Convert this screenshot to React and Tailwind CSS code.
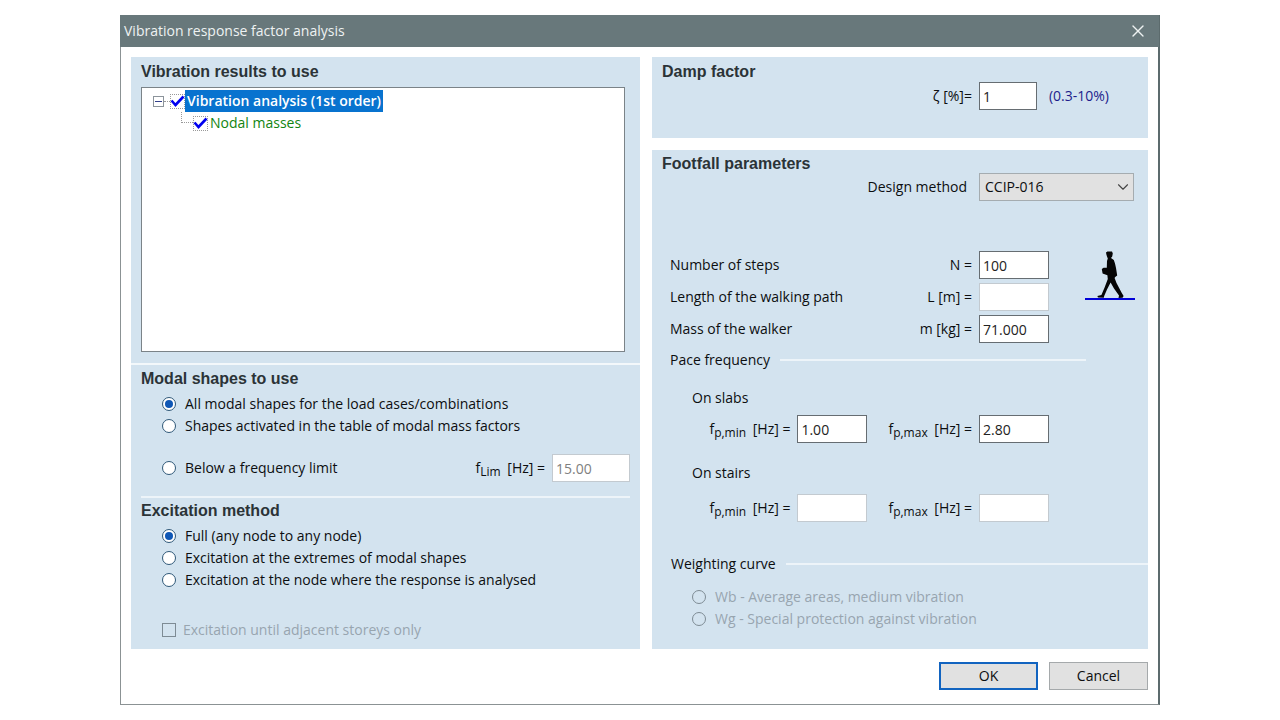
import React, { useState } from 'react';
import { ChevronDown, X } from 'lucide-react';

const modalOptions = [
  { value: 'all', label: 'All modal shapes for the load cases/combinations' },
  { value: 'table', label: 'Shapes activated in the table of modal mass factors' },
];

const excitationOptions = [
  { value: 'full', label: 'Full (any node to any node)' },
  { value: 'extremes', label: 'Excitation at the extremes of modal shapes' },
  { value: 'response', label: 'Excitation at the node where the response is analysed' },
];

const weightingOptions = [
  { value: 'wb', label: 'Wb - Average areas, medium vibration' },
  { value: 'wg', label: 'Wg - Special protection against vibration' },
];

function Heading({ children }) {
  return (
    <h2 className="font-['Liberation_Sans',Arial,sans-serif] text-base leading-[18px] font-bold text-[#2b3337]">
      {children}
    </h2>
  );
}

function Radio({ name, value, label, checked, onChange, disabled }) {
  return (
    <label className={`flex h-[22px] items-center gap-[9px] ${disabled ? 'text-[#98a5af]' : ''}`}>
      <input
        type="radio"
        name={name}
        value={value}
        checked={checked}
        disabled={disabled}
        onChange={() => onChange(value)}
        className="grid size-[14px] shrink-0 appearance-none place-content-center rounded-full border border-[#2f5878] bg-white checked:before:size-2 checked:before:rounded-full checked:before:bg-[#0f57b5] disabled:border-[#7e8b94] disabled:bg-transparent"
      />
      {label}
    </label>
  );
}

function NumberField({ id, label, value, onChange, disabled, width = 'w-[70px]' }) {
  return (
    <div className="flex items-center justify-end gap-[7px]">
      <label htmlFor={id} className="whitespace-nowrap">{label}</label>
      <input
        id={id}
        type="text"
        name={id}
        value={value}
        disabled={disabled}
        onChange={onChange}
        className={`h-7 ${width} border border-[#666d72] bg-white px-[3px] text-[#222] disabled:border-[#c3cad0] disabled:text-[#808080]`}
      />
    </div>
  );
}

function TreeCheckbox({ id, checked, onChange }) {
  return (
    <span className="relative size-[15px] shrink-0">
      <input
        id={id}
        type="checkbox"
        checked={checked}
        onChange={onChange}
        className="block size-[15px] appearance-none border border-dotted border-[#999] bg-white"
      />
      {checked && (
        <svg viewBox="0 0 15 15" className="pointer-events-none absolute inset-0 size-[15px]" fill="none" stroke="#0000f0" strokeWidth="2.6">
          <path d="M1.5 6.5 5.5 11 13.5 2.5" />
        </svg>
      )}
    </span>
  );
}

function Walker() {
  return (
    <svg viewBox="0 0 50 50" className="size-[50px]" aria-hidden="true">
      <path
        fill="#050505"
        d="M21 1.6 22.4.6 27 .6 27.8 2.4 27.2 5.4 26 7 28.8 9 30 12.5 31 17 32.2 24.5 30.2 26 29.6 27 31.5 32 36.5 41.5 38.6 45 37.6 46.8 33.5 47 34 44.5 29 37.5 25.6 31.5 22 38.5 19.2 45 18.8 46.8 13 46.4 12.4 45 16.4 44 19.6 36.5 22.8 28 22.4 24.2 17.6 22.4 16.8 18 18.6 16.8 21.8 16.8 22 10 22.8 7.4 22 5.6 21.4 3.6Z"
      />
      <path d="M0 48H50" stroke="#0000d8" strokeWidth="2" />
    </svg>
  );
}

export default function App() {
  const [tree, setTree] = useState({ analysis: true, masses: true });
  const [modal, setModal] = useState('all');
  const [excitation, setExcitation] = useState('full');
  const [method, setMethod] = useState('CCIP-016');
  const [values, setValues] = useState({
    damping: '1',
    fLim: '15.00',
    steps: '100',
    length: '',
    mass: '71.000',
    slabMin: '1.00',
    slabMax: '2.80',
    stairMin: '',
    stairMax: '',
  });

  const handleChange = (event) => {
    const { name, value } = event.target;
    setValues((prev) => ({ ...prev, [name]: value }));
  };

  const toggle = (key) => setTree((prev) => ({ ...prev, [key]: !prev[key] }));

  const frequency = (limit) => (
    <>
      f<sub className="mr-[3px] text-xs">{limit}</sub> [Hz] =
    </>
  );

  return (
    <div className="flex min-h-screen items-center justify-center bg-white font-['Open_Sans','Noto_Sans',sans-serif] text-sm leading-5 text-[#0c0e10]">
      <div className="w-full max-w-[1040px] border border-r-2 border-t-0 border-[#8b9294] border-r-[#5c6b6d] bg-white">
        <header className="-mx-px flex h-8 items-center justify-between bg-[#68787b] pr-[11px] pl-1 text-[#eef2f2]">
          <h1>Vibration response factor analysis</h1>
          <button type="button" aria-label="Close">
            <X className="size-5" strokeWidth={1.6} />
          </button>
        </header>

        <main className="px-[10px] pt-[10px] pb-[14px]">
          <div className="grid grid-cols-[509fr_496fr] gap-3">
            <div className="bg-[#d3e3ef] pb-2">
              <section className="px-[10px] pt-1.5 pb-[11px]">
                <Heading>Vibration results to use</Heading>
                <div className="mt-1.5 mr-[5px] h-[265px] border border-[#7b8388] bg-white pt-[2px] pl-[11px]">
                  <div className="flex h-[22px] items-center">
                    <button type="button" aria-label="Collapse" className="grid size-[11px] place-content-center border border-[#8c949b] bg-white">
                      <span className="block h-px w-[7px] bg-[#33418c]" />
                    </button>
                    <span className="w-1.5 border-t border-dotted border-[#999]" />
                    <TreeCheckbox id="analysis" checked={tree.analysis} onChange={() => toggle('analysis')} />
                    <label htmlFor="analysis" className="bg-[#0873cf] px-[2px] leading-[22px] font-semibold text-white">
                      Vibration analysis (1st order)
                    </label>
                  </div>
                  <div className="flex h-[22px] items-center pl-7">
                    <span className="h-[11px] w-3 self-start border-b border-l border-dotted border-[#999]" />
                    <TreeCheckbox id="masses" checked={tree.masses} onChange={() => toggle('masses')} />
                    <label htmlFor="masses" className="pl-[2px] text-[#118511]">Nodal masses</label>
                  </div>
                </div>
              </section>

              <section className="border-t-2 border-[#f3f8fb] px-[10px] pt-[5px] pb-[14px]">
                <Heading>Modal shapes to use</Heading>
                <div className="mt-[5px] pl-[21px]">
                  {modalOptions.map((option) => (
                    <Radio key={option.value} name="modal" {...option} checked={modal === option.value} onChange={setModal} />
                  ))}
                  <div className="mt-[17px] flex items-center justify-between">
                    <Radio name="modal" value="limit" label="Below a frequency limit" checked={modal === 'limit'} onChange={setModal} />
                    <NumberField
                      id="fLim"
                      label={frequency('Lim')}
                      value={values.fLim}
                      onChange={handleChange}
                      disabled={modal !== 'limit'}
                      width="w-[78px]"
                    />
                  </div>
                </div>
              </section>

              <section className="mx-[10px] border-t-2 border-[#edf4f9] pt-1">
                <Heading>Excitation method</Heading>
                <div className="mt-[5px] pl-[21px]">
                  {excitationOptions.map((option) => (
                    <Radio key={option.value} name="excitation" {...option} checked={excitation === option.value} onChange={setExcitation} />
                  ))}
                  <label className="mt-7 flex h-[22px] items-center gap-[7px] text-[#98a5af]">
                    <input type="checkbox" disabled className="size-[14px] appearance-none border border-[#7e8b94]" />
                    Excitation until adjacent storeys only
                  </label>
                </div>
              </section>
            </div>

            <div className="flex flex-col gap-3">
              <section className="bg-[#d3e3ef] px-[10px] pt-1.5 pb-7">
                <Heading>Damp factor</Heading>
                <div className="mt-px flex items-center justify-end pr-[29px]">
                  <NumberField id="damping" label="ζ [%]=" value={values.damping} onChange={handleChange} width="w-[58px]" />
                  <span className="ml-3 text-[#1d1d8c]">(0.3-10%)</span>
                </div>
              </section>

              <section className="grow bg-[#d3e3ef] pt-[5px]">
                <div className="px-[10px]">
                  <Heading>Footfall parameters</Heading>
                </div>
                <div className="flex items-center justify-end gap-3 pr-[14px]">
                  <label htmlFor="method">Design method</label>
                  <div className="relative">
                    <select
                      id="method"
                      value={method}
                      onChange={(event) => setMethod(event.target.value)}
                      className="block h-7 w-[155px] appearance-none border border-[#a5acb0] bg-[#e1e1e1] px-[5px]"
                    >
                      <option>CCIP-016</option>
                    </select>
                    <ChevronDown className="pointer-events-none absolute top-[5px] right-[2px] size-[18px] text-[#444]" strokeWidth={1.5} />
                  </div>
                </div>

                <div className="mt-[50px] flex pr-[13px] pl-[18px]">
                  <div className="flex grow flex-col gap-1">
                    <div className="flex items-center justify-between">
                      <span>Number of steps</span>
                      <NumberField id="steps" label="N =" value={values.steps} onChange={handleChange} />
                    </div>
                    <div className="flex items-center justify-between">
                      <span>Length of the walking path</span>
                      <NumberField id="length" label="L [m] =" value={values.length} onChange={handleChange} disabled />
                    </div>
                    <div className="flex items-center justify-between">
                      <span>Mass of the walker</span>
                      <NumberField id="mass" label="m [kg] =" value={values.mass} onChange={handleChange} />
                    </div>
                  </div>
                  <div className="ml-9">
                    <Walker />
                  </div>
                </div>

                <div className="mt-[7px] mr-[62px] ml-[18px] flex items-center gap-[10px]">
                  <h3>Pace frequency</h3>
                  <span className="h-0.5 grow bg-[#edf4f9]" />
                </div>
                <div className="mt-[18px] mr-[99px] ml-10">
                  <h4>On slabs</h4>
                  <div className="mt-[7px] flex justify-end gap-[21px]">
                    <NumberField id="slabMin" label={frequency('p,min')} value={values.slabMin} onChange={handleChange} />
                    <NumberField id="slabMax" label={frequency('p,max')} value={values.slabMax} onChange={handleChange} />
                  </div>
                  <h4 className="mt-5">On stairs</h4>
                  <div className="mt-[11px] flex justify-end gap-[21px]">
                    <NumberField id="stairMin" label={frequency('p,min')} value={values.stairMin} onChange={handleChange} disabled />
                    <NumberField id="stairMax" label={frequency('p,max')} value={values.stairMax} onChange={handleChange} disabled />
                  </div>
                </div>

                <div className="mt-8 ml-[19px] flex items-center gap-[10px]">
                  <h3>Weighting curve</h3>
                  <span className="h-0.5 grow bg-[#edf4f9]" />
                </div>
                <div className="mt-3 pl-10">
                  {weightingOptions.map((option) => (
                    <Radio key={option.value} name="weighting" {...option} checked={false} onChange={() => {}} disabled />
                  ))}
                </div>
              </section>
            </div>
          </div>

          <footer className="mt-[13px] flex justify-end gap-[11px]">
            <button type="button" className="h-7 w-[99px] border-2 border-[#1264c0] bg-[#e1e1e1]">OK</button>
            <button type="button" className="h-7 w-[99px] border border-[#a5a9ab] bg-[#e1e1e1]">Cancel</button>
          </footer>
        </main>
      </div>
    </div>
  );
}
